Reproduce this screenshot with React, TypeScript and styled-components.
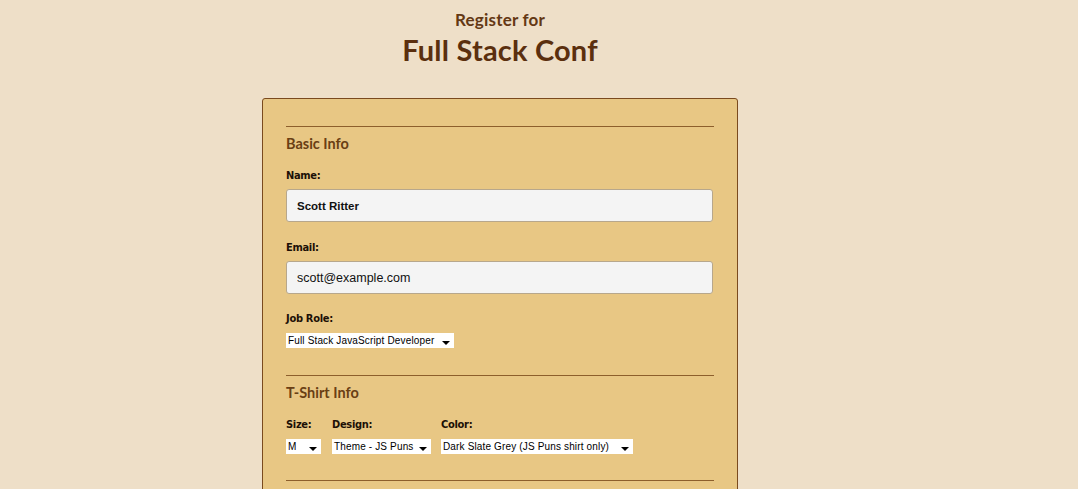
import React from "react";
import styled, { createGlobalStyle } from "styled-components";

const Global = createGlobalStyle`
  html, body { margin: 0; padding: 0; background: #eedfc8; }
  body { font-family: "Liberation Sans", Arial, sans-serif; overflow: hidden; }
`;

const Page = styled.div`
  width: 1000px;
  display: flex;
  flex-direction: column;
  align-items: center;
  min-height: 489px;
  background: #eedfc8;
`;

const Header = styled.header`
  display: flex;
  flex-direction: column;
  align-items: center;
  padding-top: 10px;
  color: #5b2f0e;
  font-family: "Lato", "Open Sans", sans-serif;
  font-weight: 700;
`;

const Sub = styled.div`
  font-size: 17px;
  line-height: 20px;
  letter-spacing: 0.2px;
  color: #643814;
`;

const Title = styled.h1`
  margin: 3px 0 0;
  font-size: 29px;
  line-height: 34px;
  font-weight: 700;
  letter-spacing: 0.2px;
`;

const Panel = styled.form`
  box-sizing: border-box;
  width: 476px;
  margin-top: 31px;
  background: #e8c784;
  border: 1px solid #7a4a1e;
  border-radius: 3px;
  padding: 27px 23px 80px;
`;

const Section = styled.fieldset<{ $top?: number }>`
  margin: ${(p) => p.$top ?? 0}px 0 0;
  padding: 0;
  border: none;
  border-top: 1px solid #8d5f2c;
  display: flex;
  flex-direction: column;
`;

const Legend = styled.div`
  font-family: "Lato", "Open Sans", sans-serif;
  font-weight: 700;
  font-size: 14.5px;
  color: #6a3f14;
  margin-top: 8px;
  line-height: 17px;
`;

const Label = styled.label`
  font-family: "DejaVu Sans Condensed", "Liberation Sans", sans-serif;
  font-weight: 700;
  font-size: 11px;
  letter-spacing: -0.3px;
  color: #1c1006;
  line-height: 14px;
  display: block;
`;

const Field = styled.div<{ $top: number; $gap?: number }>`
  display: flex;
  flex-direction: column;
  margin-top: ${(p) => p.$top}px;
  gap: ${(p) => p.$gap ?? 6}px;
`;

const TextInput = styled.input<{ $bold?: boolean }>`
  box-sizing: border-box;
  width: 427px;
  height: 33px;
  border: 1px solid #b7a78c;
  border-radius: 3px;
  background: #f4f4f4;
  padding: 0 10px;
  font-family: "Liberation Sans", Arial, sans-serif;
  font-weight: ${(p) => (p.$bold ? 700 : 400)};
  font-size: ${(p) => (p.$bold ? 11.5 : 12.5)}px;
  color: #111;
  outline: none;
`;

const SelectBox = styled.div<{ $w: number }>`
  box-sizing: border-box;
  width: ${(p) => p.$w}px;
  height: 15px;
  background: #fff;
  display: flex;
  align-items: center;
  justify-content: space-between;
  padding: 0 4px 0 2px;
  font-family: "Liberation Sans", Arial, sans-serif;
  font-size: 10px;
  letter-spacing: 0.15px;
  color: #000;
  white-space: nowrap;
`;

const Arrow = styled.span`
  width: 0;
  height: 0;
  border-left: 4px solid transparent;
  border-right: 4px solid transparent;
  border-top: 4px solid #000;
  margin-top: 5px;
`;

const Row = styled.div`
  display: flex;
  margin-top: 17px;
`;

const Col = styled.div<{ $mr: number }>`
  display: flex;
  flex-direction: column;
  gap: 7px;
  margin-right: ${(p) => p.$mr}px;
`;

const Select = ({ w, text }: { w: number; text: string }) => (
  <SelectBox $w={w}>
    <span>{text}</span>
    <Arrow />
  </SelectBox>
);

export default function App() {
  return (
    <>
      <Global />
      <Page>
        <Header>
          <Sub>Register for</Sub>
          <Title>Full Stack Conf</Title>
        </Header>
        <Panel onSubmit={(e) => e.preventDefault()}>
          <Section>
            <Legend>Basic Info</Legend>
            <Field $top={17}>
              <Label>Name:</Label>
              <TextInput $bold defaultValue="Scott Ritter" />
            </Field>
            <Field $top={19}>
              <Label>Email:</Label>
              <TextInput defaultValue="scott@example.com" />
            </Field>
            <Field $top={18} $gap={7}>
              <Label>Job Role:</Label>
              <Select w={168} text="Full Stack JavaScript Developer" />
            </Field>
          </Section>
          <Section $top={27}>
            <Legend>T-Shirt Info</Legend>
            <Row>
              <Col $mr={11}>
                <Label>Size:</Label>
                <Select w={35} text="M" />
              </Col>
              <Col $mr={10}>
                <Label>Design:</Label>
                <Select w={99} text="Theme - JS Puns" />
              </Col>
              <Col $mr={0}>
                <Label>Color:</Label>
                <Select w={192} text="Dark Slate Grey (JS Puns shirt only)" />
              </Col>
            </Row>
          </Section>
          <Section $top={26} />
        </Panel>
      </Page>
    </>
  );
}
